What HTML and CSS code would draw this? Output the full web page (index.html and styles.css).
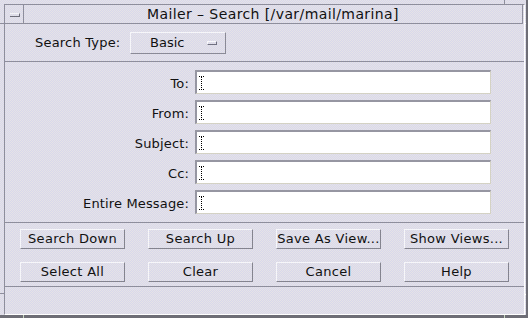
FILE: index.html
```html
<!DOCTYPE html>
<html lang="en">
<head>
    <meta charset="UTF-8">
    <title>Mailer - Search</title>
    <link rel="stylesheet" href="styles.css">
</head>
<body>

    <div class="window">
        <!-- resize corner marks on the frame -->
        <span class="tick tick--tl-h"></span>
        <span class="tick tick--tr-v"></span>
        <span class="tick tick--tr-h"></span>
        <span class="tick tick--bl-h"></span>
        <span class="tick tick--bl-v"></span>
        <span class="tick tick--br-h"></span>
        <span class="tick tick--br-v"></span>

        <div class="frame">
            <div class="titlebar">
                <div class="titlebar--menu"><span class="titlebar--dash"></span></div>
                <div class="titlebar--title">Mailer – Search [/var/mail/marina]</div>
            </div>

            <div class="type-row">
                <span class="type-row--label">Search Type:</span>
                <div class="option">
                    <span class="option--text">Basic</span>
                    <span class="option--mark"></span>
                </div>
            </div>

            <div class="fields">
                <label class="fields--label">To:</label>
                <div class="field"><svg class="caret" width="5" height="14" viewBox="0 0 5 14"><path d="M0 .5h5M0 13.5h5M2.5 1v12" stroke="#000" stroke-dasharray="1 1" fill="none"/></svg></div>
                <label class="fields--label">From:</label>
                <div class="field"><svg class="caret" width="5" height="14" viewBox="0 0 5 14"><path d="M0 .5h5M0 13.5h5M2.5 1v12" stroke="#000" stroke-dasharray="1 1" fill="none"/></svg></div>
                <label class="fields--label">Subject:</label>
                <div class="field"><svg class="caret" width="5" height="14" viewBox="0 0 5 14"><path d="M0 .5h5M0 13.5h5M2.5 1v12" stroke="#000" stroke-dasharray="1 1" fill="none"/></svg></div>
                <label class="fields--label">Cc:</label>
                <div class="field"><svg class="caret" width="5" height="14" viewBox="0 0 5 14"><path d="M0 .5h5M0 13.5h5M2.5 1v12" stroke="#000" stroke-dasharray="1 1" fill="none"/></svg></div>
                <label class="fields--label">Entire Message:</label>
                <div class="field"><svg class="caret" width="5" height="14" viewBox="0 0 5 14"><path d="M0 .5h5M0 13.5h5M2.5 1v12" stroke="#000" stroke-dasharray="1 1" fill="none"/></svg></div>
            </div>

            <div class="buttons">
                <div class="button">Search Down</div>
                <div class="button">Search Up</div>
                <div class="button">Save As View...</div>
                <div class="button">Show Views...</div>
                <div class="button">Select All</div>
                <div class="button">Clear</div>
                <div class="button">Cancel</div>
                <div class="button">Help</div>
            </div>

            <div class="status"></div>
        </div>
    </div>

</body>
</html>
```

FILE: styles.css
```css
html, body {
    margin: 0;
    overflow: hidden;
}
body {
    font-family: 'DejaVu Sans', sans-serif;
    font-size: 13px;
    color: #111111;
}

.window {
    position: relative;
    width: 528px;
    height: 318px;
    box-sizing: border-box;
    display: flex;
    padding: 4px 1px 0 4px;
    border-right: 2px solid #6e6e76;
    border-bottom: 3px solid #6e6e76;
    background: repeating-conic-gradient(#d8d8ec 0 25%, #e6e3e6 0 50%) 0 0 / 2px 2px;
}

.tick {
    position: absolute;
    background-color: #8e8e9c;
}
.tick--tl-h { left: 0; top: 23px; width: 4px; height: 1px; }
.tick--tr-v { left: 504px; top: 0; width: 1px; height: 4px; }
.tick--tr-h { left: 525px; top: 23px; width: 1px; height: 1px; background-color: #ffffff; }
.tick--bl-h { left: 0; top: 293px; width: 4px; height: 1px; }
.tick--bl-v { left: 23px; top: 315px; width: 1px; height: 3px; background-color: #c8d8c0; }
.tick--br-h { left: 525px; top: 294px; width: 1px; height: 1px; background-color: #ffffff; }
.tick--br-v { left: 504px; top: 315px; width: 1px; height: 3px; background-color: #c8d8c0; }

.frame {
    flex: 1;
    display: flex;
    flex-direction: column;
    border-left: 1px solid #8e8e9c;
    border-top: 1px solid #8e8e9c;
    border-right: 1px solid #ffffff;
    border-bottom: 1px solid #ffffff;
}

.titlebar {
    display: flex;
    height: 18px;
    margin-right: 1px;
    border-bottom: 1px solid #8e8e9c;
    border-right: 1px solid #8e8e9c;
}
.titlebar--menu {
    width: 18px;
    border-right: 1px solid #8e8e9c;
    display: flex;
    align-items: center;
    justify-content: center;
}
.titlebar--dash {
    width: 9px;
    height: 2px;
    border-top: 1px solid #f4f4f8;
    border-bottom: 1px solid #6e6e7a;
    border-right: 1px solid #6e6e7a;
    margin: 1px 0 0 2px;
}
.titlebar--title {
    flex: 1;
    text-align: center;
    font-size: 14px;
    line-height: 18px;
    letter-spacing: .4px;
}

.type-row {
    display: flex;
    align-items: center;
    height: 37px;
    padding-left: 30px;
    border-bottom: 1px solid #8e8e9c;
}
.type-row--label {
    width: 95px;
    letter-spacing: .2px;
}
.option {
    width: 96px;
    height: 22px;
    box-sizing: border-box;
    display: flex;
    align-items: center;
    justify-content: space-between;
    padding: 0 8px 0 19px;
    border-top: 1px solid #f6f6fa;
    border-left: 1px solid #f6f6fa;
    border-right: 1px solid #8a8a96;
    border-bottom: 1px solid #8a8a96;
}
.option--mark {
    width: 8px;
    height: 2px;
    border-top: 1px solid #f8f8fc;
    border-left: 1px solid #f8f8fc;
    border-right: 1px solid #707080;
    border-bottom: 1px solid #707080;
}

.fields {
    display: grid;
    grid-template-columns: 185px 296px;
    grid-auto-rows: 24px;
    column-gap: 5px;
    row-gap: 6px;
    padding: 8px 0;
    border-bottom: 1px solid #8e8e9c;
}
.fields--label {
    display: flex;
    align-items: center;
    justify-content: flex-end;
    padding-top: 2px;
    padding-right: 1px;
    letter-spacing: .15px;
}
.field {
    box-sizing: border-box;
    display: flex;
    align-items: center;
    padding-left: 2px;
    background-color: #ffffff;
    border-top: 2px solid #9696a2;
    border-left: 2px solid #9696a2;
    border-right: 1px solid #d4d2c4;
    border-bottom: 1px solid #d4d2c4;
}

.buttons {
    display: grid;
    grid-template-columns: repeat(4, 105px);
    grid-auto-rows: 20px;
    column-gap: 23px;
    row-gap: 13px;
    padding: 6px 0 4px 15px;
    border-bottom: 1px solid #8e8e9c;
}
.button {
    box-sizing: border-box;
    text-align: center;
    line-height: 18px;
    letter-spacing: .3px;
    border-top: 1px solid #f6f6fa;
    border-left: 1px solid #f6f6fa;
    border-right: 1px solid #84848f;
    border-bottom: 1px solid #84848f;
}

.status {
    flex: 1;
}
```
